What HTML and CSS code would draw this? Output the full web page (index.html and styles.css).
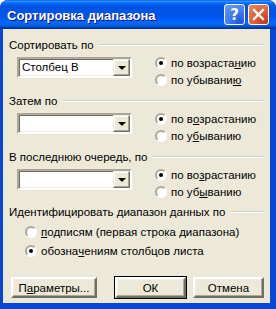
FILE: index.html
```html
<!DOCTYPE html>
<html lang="ru">
<head>
    <meta charset="UTF-8">
    <title>Сортировка диапазона</title>
    <link rel="stylesheet" href="styles.css">
</head>
<body>

    <div class="window">
        <div class="titlebar">
            <span class="title">Сортировка диапазона</span>
            <div class="title-buttons">
                <span class="tb-btn help">?</span>
                <span class="tb-btn close">
                    <svg width="13" height="13" viewBox="0 0 13 13">
                        <path d="M2 2 L11 11 M11 2 L2 11" stroke="#fff" stroke-width="2.4" stroke-linecap="square"/>
                    </svg>
                </span>
            </div>
        </div>

        <div class="dialog">
            <div class="group-title"><span>Сортировать по</span><span class="rule"></span></div>
            <div class="sort-row">
                <div class="combo">
                    <span class="combo-text">Столбец В</span>
                    <span class="combo-arrow"></span>
                </div>
                <div class="radios">
                    <div class="radio"><span class="dot checked"></span>по возраста<u>н</u>ию</div>
                    <div class="radio"><span class="dot"></span>по убывани<u>ю</u></div>
                </div>
            </div>

            <div class="group-title"><span>Затем по</span><span class="rule"></span></div>
            <div class="sort-row">
                <div class="combo">
                    <span class="combo-text"></span>
                    <span class="combo-arrow"></span>
                </div>
                <div class="radios">
                    <div class="radio"><span class="dot checked"></span>по в<u>о</u>зрастанию</div>
                    <div class="radio"><span class="dot"></span>по у<u>б</u>ыванию</div>
                </div>
            </div>

            <div class="group-title"><span>В последнюю очередь, по</span><span class="rule"></span></div>
            <div class="sort-row">
                <div class="combo">
                    <span class="combo-text"></span>
                    <span class="combo-arrow"></span>
                </div>
                <div class="radios">
                    <div class="radio"><span class="dot checked"></span>по во<u>з</u>растанию</div>
                    <div class="radio"><span class="dot"></span>по уб<u>ы</u>ванию</div>
                </div>
            </div>

            <div class="group-title last"><span>Идентифицировать диапазон данных по</span><span class="rule"></span></div>
            <div class="id-radios">
                <div class="radio"><span class="dot"></span><u>п</u>одписям (первая строка диапазона)</div>
                <div class="radio"><span class="dot checked"></span>обозна<u>ч</u>ениям столбцов листа</div>
            </div>

            <div class="buttons">
                <span class="btn wide">П<u>а</u>раметры...</span>
                <span class="btn default">ОК</span>
                <span class="btn">Отмена</span>
            </div>
        </div>
    </div>

</body>
</html>
```

FILE: styles.css
```css
body {
    margin: 0;
    background-color: #fff;
}
.window {
    width: 276px;
    height: 309px;
    background-color: #0846d8;
    border-radius: 8px 8px 0 0;
    display: flex;
    flex-direction: column;
    overflow: hidden;
}
/* заголовок окна в стиле XP */
.titlebar {
    height: 29px;
    flex: none;
    display: flex;
    align-items: center;
    justify-content: space-between;
    padding: 0 7px 0 7px;
    box-sizing: border-box;
    background: linear-gradient(to bottom, #0058ee 0%, #3593ff 4%, #288eff 6%, #127dff 8%, #036ffc 10%, #0262ee 14%, #0057e5 20%, #0054e3 24%, #0055eb 56%, #005bf5 66%, #026afe 76%, #0062ef 86%, #0052d6 92%, #0040ab 94%, #003092 100%);
}
.title {
    font-family: "Liberation Sans", Arial, sans-serif;
    font-weight: bold;
    font-size: 13px;
    color: #fff;
    text-shadow: 1px 1px #0f1089;
    margin-top: 1px;
}
.title-buttons {
    display: flex;
    gap: 3px;
}
.tb-btn {
    width: 19px;
    height: 19px;
    border: 1px solid #fff;
    border-radius: 3px;
    display: flex;
    align-items: center;
    justify-content: center;
    color: #fff;
    font-family: "DejaVu Sans", sans-serif;
    font-weight: bold;
    font-size: 15px;
}
.help {
    background: radial-gradient(circle at 80% 90%, #2255d8 0%, #3f79f2 45%, #6f9ef8 100%);
}
.close {
    background: radial-gradient(circle at 85% 90%, #c23a16 0%, #e1623b 55%, #ec8a68 100%);
}

.dialog {
    flex: 1;
    margin: 0 6px 6px 3px;
    background-color: #ece9d8;
    font-family: "Liberation Sans", Arial, sans-serif;
    font-size: 11.5px;
    color: #000;
    padding: 9px 5px 0 6px;
}
.group-title {
    height: 14px;
    display: flex;
    align-items: center;
    white-space: nowrap;
}
.group-title + .sort-row {
    margin-top: 2px;
}
.sort-row + .group-title {
    margin-top: 6px;
}
.group-title.last {
    margin-top: 5px;
}
.rule {
    flex: 1;
    margin-left: 6px;
    border-top: 1px solid #d0d0bf;
    border-bottom: 1px solid #fff;
}
.sort-row {
    height: 34px;
    display: flex;
    align-items: flex-start;
}
.combo {
    width: 111px;
    height: 17px;
    margin: 3px 0 0 8px;
    display: flex;
    background-color: #fff;
    border: 2px solid;
    border-color: #aca899 #fff #fff #aca899;
    box-shadow: inset 1px 1px #716f64, inset -1px -1px #f1efe2;
}
.combo-text {
    flex: 1;
    padding: 2px 3px;
    line-height: 13px;
}
.combo-arrow {
    width: 17px;
    height: 17px;
    box-sizing: border-box;
    background-color: #ece9d8;
    border: 1px solid;
    border-color: #f1efe2 #716f64 #716f64 #f1efe2;
    box-shadow: inset -1px -1px #aca899, inset 1px 1px #fff;
    display: flex;
    align-items: center;
    justify-content: center;
}
.combo-arrow::after {
    content: "";
    border-top: 4px solid #000;
    border-left: 4px solid transparent;
    border-right: 4px solid transparent;
}
.radios {
    margin-left: 23px;
}
.radio {
    height: 17px;
    display: flex;
    align-items: center;
    white-space: nowrap;
}
.dot {
    width: 8px;
    height: 8px;
    border: 2px solid;
    border-color: #aca899 #fff #fff #aca899;
    border-radius: 50%;
    background-color: #fff;
    margin-right: 4px;
    display: flex;
    align-items: center;
    justify-content: center;
}
.dot.checked::after {
    content: "";
    width: 4px;
    height: 4px;
    border-radius: 50%;
    background-color: #000;
}
.id-radios {
    margin: 3px 0 0 16px;
}
.id-radios .radio {
    height: 19px;
}
.buttons {
    display: flex;
    margin-top: 17px;
    margin-left: 2px;
    gap: 7px;
}
.btn {
    width: 67px;
    height: 17px;
    display: flex;
    align-items: center;
    justify-content: center;
    border: 2px solid;
    border-color: #fff #716f64 #716f64 #fff;
    box-shadow: inset -1px -1px #aca899, inset 1px 1px #f1efe2;
}
.btn.wide {
    width: 82px;
    margin-right: 11px;
}
.btn.default {
    outline: 1px solid #000;
}
```
